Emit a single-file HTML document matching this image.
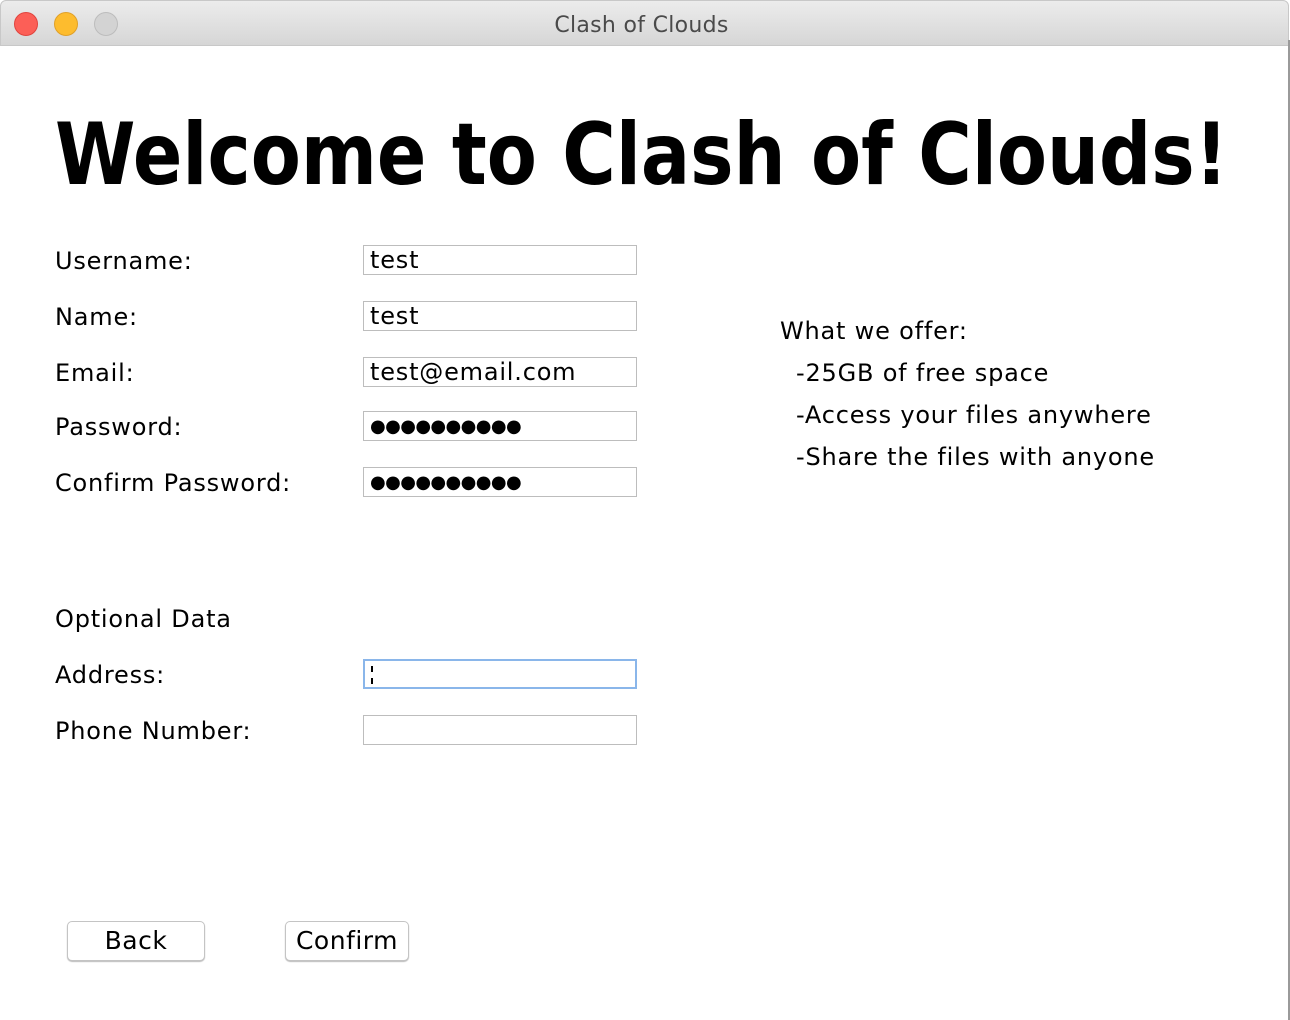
<!DOCTYPE html>
<html><head><meta charset="utf-8"><style>
*{margin:0;padding:0;box-sizing:border-box}
body{width:1290px;height:1020px;background:#fff;position:relative;overflow:hidden;font-family:"DejaVu Sans","Liberation Sans",sans-serif;color:#000}
.tb{position:absolute;left:0;top:0;width:1289px;height:46px;background:linear-gradient(#ececec,#d6d6d6);border-bottom:1px solid #b9b9b9;border-radius:6px 6px 0 0;border:1px solid #c8c8c8}
.dot{position:absolute;top:12px;width:24px;height:24px;border-radius:50%}
.title{position:absolute;top:13px;left:0;width:1283px;text-align:center;font-size:22px;color:#4a4a4a;font-family:"DejaVu Sans",sans-serif;letter-spacing:0.3px}
.edge{position:absolute;left:1288px;top:40px;width:2px;height:980px;background:#9a9a9a}
.l{position:absolute;left:55px;font-size:24px;line-height:30px;letter-spacing:0.8px}
.f{position:absolute;left:363px;width:274px;height:30px;border:1px solid #bdbdbd;font-size:24px;line-height:28px;padding-left:6px;letter-spacing:0.8px}
.r{position:absolute;font-size:24px;line-height:30px;letter-spacing:0.8px}
.btn{position:absolute;top:921px;height:40px;border:1px solid #c4c4c4;border-radius:5px;box-shadow:0 1px 1px #bbb;font-size:25px;text-align:center;line-height:38px;background:#fff;letter-spacing:0.5px}
.pw{font-size:18px;letter-spacing:-0.6px;line-height:30px}
</style></head><body>
<div class="tb"></div>
<div class="dot" style="left:14px;background:#fc5f57;border:1px solid #e0443e"></div>
<div class="dot" style="left:54px;background:#fdbc2e;border:1px solid #e0a028"></div>
<div class="dot" style="left:94px;background:#d3d3d3;border:1px solid #bcbcbc"></div>
<div class="title">Clash of Clouds</div>
<div class="edge"></div>
<svg style="position:absolute;left:0;top:0" width="1290" height="200"><text x="55" y="184" font-family="DejaVu Sans" font-weight="bold" font-size="86" textLength="1173" lengthAdjust="spacingAndGlyphs">Welcome to Clash of Clouds!</text></svg>
<div class="l" style="top:246px">Username:</div>
<div class="l" style="top:302px">Name:</div>
<div class="l" style="top:358px">Email:</div>
<div class="l" style="top:412px">Password:</div>
<div class="l" style="top:468px">Confirm Password:</div>
<div class="l" style="top:604px">Optional Data</div>
<div class="l" style="top:660px">Address:</div>
<div class="l" style="top:716px">Phone Number:</div>
<div class="f" style="top:245px">test</div>
<div class="f" style="top:301px">test</div>
<div class="f" style="top:357px">test@email.com</div>
<div class="f pw" style="top:411px">●●●●●●●●●●</div>
<div class="f pw" style="top:467px">●●●●●●●●●●</div>
<div class="f" style="top:659px;border:2px solid #8ab6ea"><div style="position:absolute;left:6px;top:5px;width:2px;height:6px;background:#000"></div><div style="position:absolute;left:6px;top:17px;width:2px;height:6px;background:#000"></div></div>
<div class="f" style="top:715px"></div>
<div class="r" style="left:780px;top:316px">What we offer:</div>
<div class="r" style="left:796px;top:358px">-25GB of free space</div>
<div class="r" style="left:796px;top:400px">-Access your files anywhere</div>
<div class="r" style="left:796px;top:442px">-Share the files with anyone</div>
<div class="btn" style="left:67px;width:138px">Back</div>
<div class="btn" style="left:285px;width:124px">Confirm</div>
</body></html>
